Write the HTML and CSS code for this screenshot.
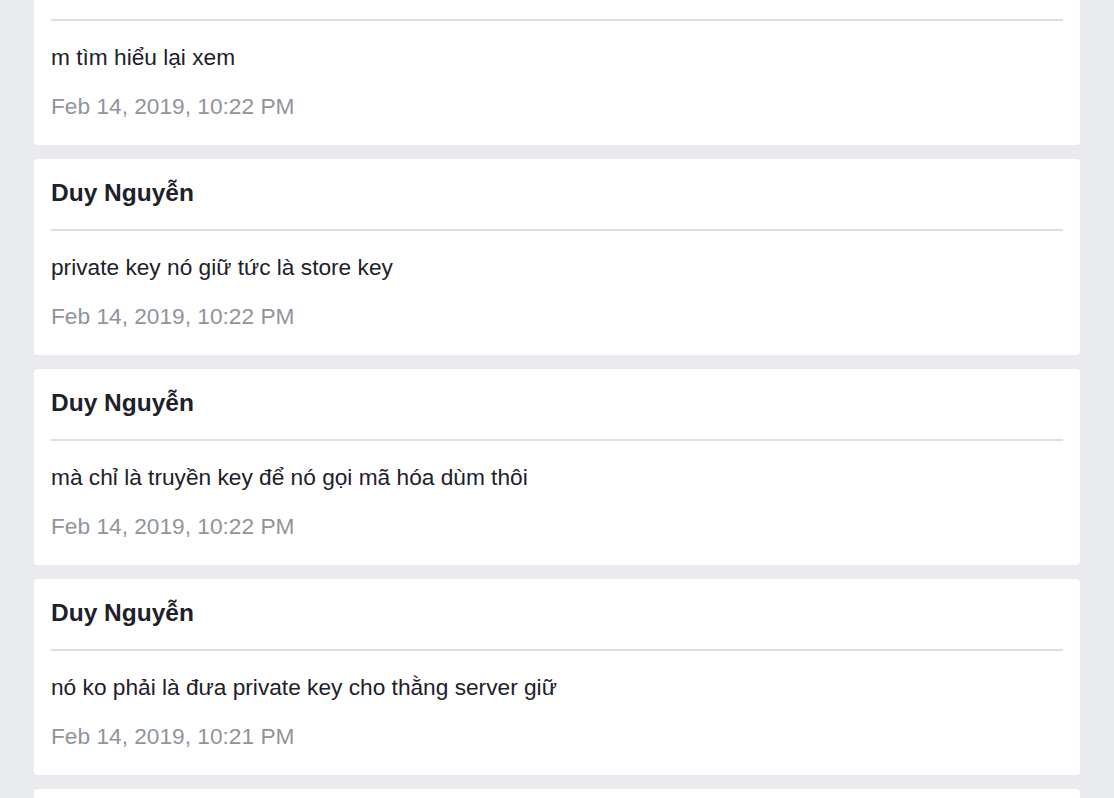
FILE: index.html
```html
<!DOCTYPE html>
<html lang="vi">
<head>
<meta charset="utf-8">
<title>Messages</title>
<link rel="stylesheet" href="styles.css">
</head>
<body>
<main class="feed">
  <article class="card">
    <header class="card-head"><h2 class="author">Duy Nguyễn</h2></header>
    <p class="msg">m tìm hiểu lại xem</p>
    <p class="date">Feb 14, 2019, 10:22 PM</p>
  </article>
  <article class="card">
    <header class="card-head"><h2 class="author">Duy Nguyễn</h2></header>
    <p class="msg">private key nó giữ tức là store key</p>
    <p class="date">Feb 14, 2019, 10:22 PM</p>
  </article>
  <article class="card">
    <header class="card-head"><h2 class="author">Duy Nguyễn</h2></header>
    <p class="msg">mà chỉ là truyền key để nó gọi mã hóa dùm thôi</p>
    <p class="date">Feb 14, 2019, 10:22 PM</p>
  </article>
  <article class="card">
    <header class="card-head"><h2 class="author">Duy Nguyễn</h2></header>
    <p class="msg">nó ko phải là đưa private key cho thằng server giữ</p>
    <p class="date">Feb 14, 2019, 10:21 PM</p>
  </article>
  <article class="card">
    <header class="card-head"><h2 class="author">Duy Nguyễn</h2></header>
    <p class="msg">vậy thì phải có cách khác</p>
    <p class="date">Feb 14, 2019, 10:21 PM</p>
  </article>
</main>
</body>
</html>
```

FILE: styles.css
```css
html, body {
  margin: 0;
  padding: 0;
  height: 100%;
  overflow: hidden;
}
body {
  background: #e9ebee;
  font-family: "Liberation Sans", Arial, Helvetica, sans-serif;
  color: #1d2129;
}
.feed {
  display: flex;
  flex-direction: column;
  gap: 14px;
  padding: 0 34px;
  margin-top: -51px;
}
.card {
  background: #ffffff;
  border-radius: 4px;
  padding: 0 17px 25px;
}
.card-head {
  padding: 18px 0 20px;
  border-bottom: 2px solid #dddfe2;
}
.author {
  margin: 0;
  font-size: 24.5px;
  line-height: 32px;
  font-weight: 700;
  color: #1d2129;
}
.msg {
  margin: 22px 0 0;
  font-size: 22.7px;
  line-height: 28px;
  color: #1d2129;
}
.date {
  margin: 21px 0 0;
  font-size: 22.7px;
  line-height: 28px;
  color: #90949c;
}
```
